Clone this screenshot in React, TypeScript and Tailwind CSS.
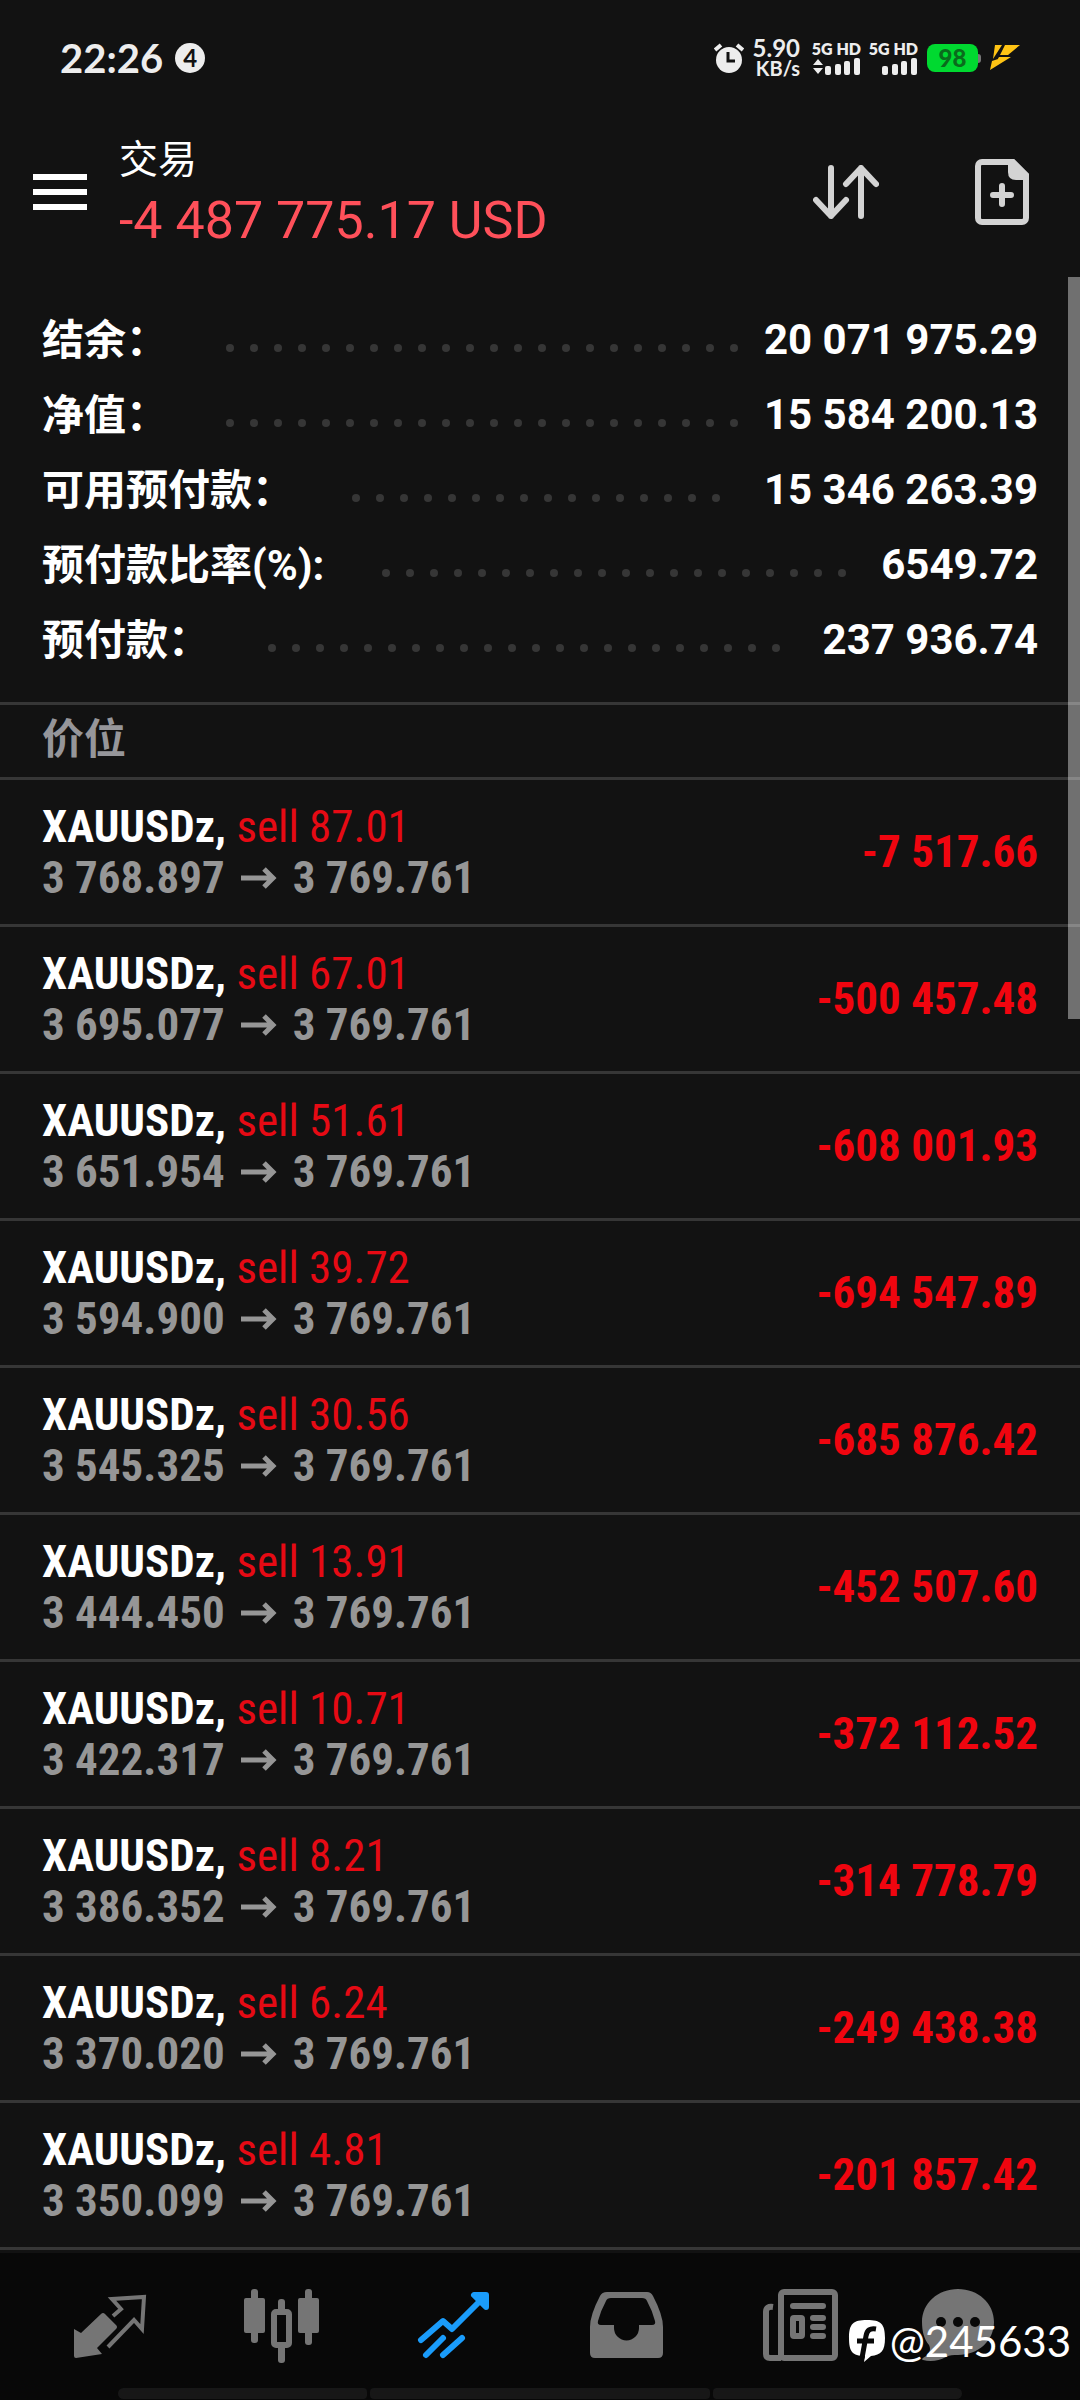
import React from "react";
import clsx from "clsx";

const summary = [
    { label: "结余：", value: "20 071 975.29" },
    { label: "净值：", value: "15 584 200.13" },
    { label: "可用预付款：", value: "15 346 263.39" },
    { label: "预付款比率(%):", value: "6549.72" },
    { label: "预付款：", value: "237 936.74" },
];

const positions = [
    { volume: "87.01", open: "3 768.897", profit: "-7 517.66" },
    { volume: "67.01", open: "3 695.077", profit: "-500 457.48" },
    { volume: "51.61", open: "3 651.954", profit: "-608 001.93" },
    { volume: "39.72", open: "3 594.900", profit: "-694 547.89" },
    { volume: "30.56", open: "3 545.325", profit: "-685 876.42" },
    { volume: "13.91", open: "3 444.450", profit: "-452 507.60" },
    { volume: "10.71", open: "3 422.317", profit: "-372 112.52" },
    { volume: "8.21", open: "3 386.352", profit: "-314 778.79" },
    { volume: "6.24", open: "3 370.020", profit: "-249 438.38" },
    { volume: "4.81", open: "3 350.099", profit: "-201 857.42" },
];

const Signal = ({ data = false }: { data?: boolean }) => (
    <div className="flex w-12 flex-col items-end">
        <span className="text-base font-extrabold leading-4 whitespace-nowrap">5G HD</span>
        <svg width="48" height="18" viewBox="0 0 48 18" fill="currentColor">
            {data && <path d="M5 2l5 6H0zM5 17l5-6H0z" />}
            <rect x="12" y="9" width="6" height="9" rx="2" />
            <rect x="22" y="7" width="6" height="11" rx="2" />
            <rect x="31" y="4" width="6" height="14" rx="2" />
            <rect x="41" y="1" width="6" height="17" rx="2" />
        </svg>
    </div>
);

const StatusBar = () => (
    <div className="flex h-[116px] items-center justify-between px-[60px] font-[Lato,sans-serif] text-[#ededed]">
        <div className="flex items-center gap-3">
            <span className="text-[40px] font-bold leading-10">22:26</span>
            <span className="flex size-[30px] items-center justify-center rounded-full bg-[#ededed] text-2xl font-bold text-[#121212]">4</span>
        </div>
        <div className="flex items-center gap-[9px]">
            <svg width="30" height="30" viewBox="0 0 30 30">
                <circle cx="15" cy="17" r="13" fill="#ededed" />
                <path d="M1 7l6-5M29 7l-6-5" stroke="#ededed" strokeWidth="4" />
                <path d="M14 9v9h7" fill="none" stroke="#121212" strokeWidth="3" />
            </svg>
            <div className="mr-1 flex flex-col items-end font-bold">
                <span className="text-2xl leading-5">5.90</span>
                <span className="text-xl leading-5">KB/s</span>
            </div>
            <Signal data />
            <Signal />
            <div className="flex items-center">
                <div className="flex h-7 w-[51px] items-center justify-center rounded-lg bg-[#00d930] text-2xl font-black text-[#0a6b1c]">98</div>
                <div className="h-[9px] w-[3px] rounded-r bg-[#777777]" />
            </div>
            <svg width="30" height="26" viewBox="0 0 30 26" fill="#ffc414">
                <path d="M5 0h7L3 14zM15 0h15L18 10h-8z" />
                <path d="M9 12h12L0 25l2-9 6-2-2 3z" />
            </svg>
        </div>
    </div>
);

const Header = () => (
    <header className="flex h-[152px] items-center pr-[51px] pl-[33px]">
        <button aria-label="menu" className="flex w-[54px] flex-col gap-[9px]">
            <span className="h-[6px] bg-white" />
            <span className="h-[6px] bg-white" />
            <span className="h-[6px] bg-white" />
        </button>
        <div className="ml-8 flex-1">
            <h1 className="text-[39px] leading-[58px] text-white">交易</h1>
            <p className="text-[52px] leading-[64px] text-[#ff505a]">-4 487 775.17 USD</p>
        </div>
        <button aria-label="sort" className="mr-[96px]">
            <svg width="66" height="54" viewBox="0 0 66 54" fill="none" stroke="#d3d3d3" strokeWidth="6" strokeLinecap="round" strokeLinejoin="round">
                <path d="M18 3v48M3 35l15 16 15-16M48 51V3M33 19L48 3l15 16" />
            </svg>
        </button>
        <button aria-label="new order">
            <svg width="54" height="66" viewBox="0 0 54 66" fill="none" stroke="#d3d3d3" strokeWidth="6">
                <path d="M7 3h31l13 13v43a4 4 0 0 1-4 4H7a4 4 0 0 1-4-4V7a4 4 0 0 1 4-4z" />
                <path d="M33 3v10q0 8 8 8h10V15L39 3z" fill="#d3d3d3" stroke="none" />
                <path d="M27 27v18M18 36h18" strokeLinecap="round" />
            </svg>
        </button>
    </header>
);

// dots wrap instead of clipping, so only whole ones show
const Leader = () => (
    <div aria-hidden="true" className="mt-4 mr-[14px] ml-[50px] flex h-2 flex-1 flex-wrap overflow-hidden">
        {Array.from({ length: 40 }, (_, i) => (
            <span key={i} className="flex h-2 w-6 justify-center">
                <span className="size-2 rounded-full bg-[#363636]" />
            </span>
        ))}
    </div>
);

const Summary = () => (
    <dl className="px-[42px] pt-[34px] pb-[25px] text-[42px] font-bold text-white">
        {summary.map((row) => (
            <div key={row.label} className="flex h-[75px] items-center">
                <dt className="pt-[2px]">{row.label}</dt>
                <Leader />
                <dd>{row.value}</dd>
            </div>
        ))}
    </dl>
);

const Positions = () => (
    <section>
        <h2 className="h-[78px] border-y-[3px] border-[#363636] px-[42px] text-[42px] font-bold leading-[70px] text-[#96969a]">价位</h2>
        <ul className="font-['Roboto_Condensed','Liberation_Sans_Narrow',Roboto,sans-serif]">
            {positions.map((p) => (
                <li key={p.open} className="flex h-[147px] items-center justify-between border-b-[3px] border-[#363636] px-[42px] text-[45px] font-bold">
                    <div className="leading-[51px]">
                        <p className="text-white">
                            XAUUSDz, <span className="font-normal text-[#e60a14]">sell {p.volume}</span>
                        </p>
                        <p className="flex items-center text-[#969696]">
                            {p.open}
                            <svg className="mx-4" width="36" height="22" viewBox="0 0 36 22" fill="none" stroke="currentColor" strokeWidth="5">
                                <path d="M0 11h32M23 2l9 9-9 9" />
                            </svg>
                            3 769.761
                        </p>
                    </div>
                    <span className="text-[#f0050f]">{p.profit}</span>
                </li>
            ))}
        </ul>
    </section>
);

const tabs = [
    {
        name: "quotes",
        icon: (
            <>
                <path d="M12 52l7 4 20-19q2-2 4 0l11 11q2 2 0 4L35 71l5 6-26 4q-2 0-2-2z" fill="currentColor" />
                <path d="M51 39l8-7-9-10 32-2-2 32-8-9-26 27" fill="none" stroke="currentColor" strokeWidth="4" />
            </>
        ),
    },
    {
        name: "charts",
        icon: (
            <g fill="currentColor">
                <rect x="10" y="21" width="21" height="35" rx="2" />
                <rect x="17" y="12" width="7" height="54" rx="3" />
                <rect x="64" y="21" width="21" height="35" rx="2" />
                <rect x="71" y="12" width="7" height="56" rx="3" />
                <rect x="44" y="22" width="7" height="14" rx="3" />
                <rect x="44" y="68" width="7" height="18" rx="3" />
                <rect x="40" y="35" width="15" height="33" rx="2" fill="none" stroke="currentColor" strokeWidth="6" />
            </g>
        ),
    },
    {
        name: "trade",
        icon: (
            <g fill="none" stroke="currentColor" strokeWidth="6" strokeLinejoin="round">
                <path d="M15 63l22-19 9 8 33-33M20 78l17-17M37 78l19-17" strokeLinecap="round" />
                <path d="M68 18h12v12z" strokeLinecap="round" fill="currentColor" />
            </g>
        ),
    },
    {
        name: "history",
        icon: (
            <path
                fillRule="evenodd"
                fill="currentColor"
                d="M29 15h40q4 0 6 4 10 19 10 31v26q0 5-5 5H17q-5 0-5-5V50q0-12 10-31 2-4 7-4zM33 21q-4 0-5 3-5 9-8 20-1 4 3 4h13v3a12 12 0 0 0 25 0v-3h13q4 0 3-4-3-11-8-20-1-3-5-3z"
            />
        ),
    },
    {
        name: "news",
        icon: (
            <g fill="none" stroke="currentColor" strokeWidth="6" strokeLinecap="round">
                <rect x="31" y="15" width="54" height="66" rx="3" />
                <path d="M23 30q-7-1-7 5v42q0 4 4 4h11" strokeLinecap="butt" />
                <path d="M43 29h30M63 41h10M63 50h10M63 59h10" />
                <rect x="43" y="41" width="9" height="18" rx="1" />
            </g>
        ),
    },
    {
        name: "chat",
        icon: (
            <g>
                <path d="M36 12c20 0 36 14 36 33S56 78 36 78c-5 0-8 0-12 2-7 4-16 5-23 3-2-1 0-2 3-4 4-3 5-7 3-11C2 62 0 54 0 45c0-19 16-33 36-33z" fill="currentColor" />
                <circle cx="19" cy="45" r="5" fill="#080808" />
                <circle cx="36" cy="45" r="5" fill="#080808" />
                <circle cx="53" cy="45" r="5" fill="#080808" />
            </g>
        ),
    },
];

const Watermark = () => (
    <div className="absolute right-[9px] bottom-[34px] flex items-center gap-1 font-[Lato,sans-serif] text-[42px] leading-[50px] text-white">
        <svg width="38" height="44" viewBox="0 0 38 44">
            <path d="M19 1c14 0 18 4 18 18 0 13-4 17-14 18l-7 6 1-6C4 37 1 32 1 19 1 5 5 1 19 1z" fill="#ffffff" />
            <path d="M28 10c-6-1-9 1-10 7l-4 22M9 22h17" fill="none" stroke="#080808" strokeWidth="5" />
        </svg>
        <span>@245633</span>
    </div>
);

const TabBar = () => (
    <nav className="relative mt-[3px] flex flex-1 flex-col bg-[#080808] pt-6">
        <div className="grid grid-cols-6 px-6">
            {tabs.map((tab) => (
                <button key={tab.name} aria-label={tab.name} className={clsx("flex justify-center", tab.name === "trade" ? "text-[#1a9cfb]" : "text-[#757575]")}>
                    <svg width="96" height="96" viewBox="0 0 96 96">{tab.icon}</svg>
                </button>
            ))}
        </div>
        <div className="mt-[15px] flex h-[11px] gap-[3px] px-[118px]">
            <div className="w-[249px] rounded-l-md rounded-r-sm bg-[#171717]" />
            <div className="flex-1 rounded-sm bg-[#171717]" />
            <div className="w-[249px] rounded-l-sm rounded-r-md bg-[#171717]" />
        </div>
        <Watermark />
    </nav>
);

const App = () => {
    return (
        <div className="flex min-h-screen flex-col bg-[#121212] font-[Roboto,'Noto_Sans_CJK_SC',sans-serif]">
            <StatusBar />
            <Header />
            <main className="relative">
                <Summary />
                <Positions />
                <div className="absolute top-[9px] right-0 h-[742px] w-3 bg-white/40" />
            </main>
            <TabBar />
        </div>
    );
};

export default App;
